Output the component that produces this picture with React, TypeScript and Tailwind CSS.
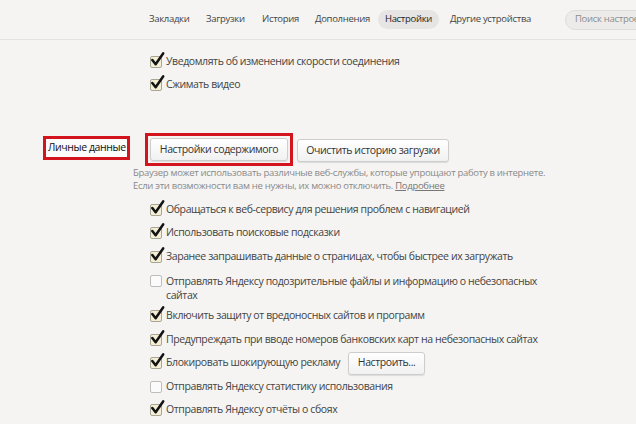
import React from "react";

const font = { fontFamily: '"Open Sans", "Noto Sans", sans-serif' };

function Check({ on }: { on: boolean }) {
    return (
        <span className="relative inline-block w-[12px] h-[12px] shrink-0">
            <span
                className={
                    "absolute inset-0 border rounded-[2px] " +
                    (on ? "border-[#a8a594] bg-[#f4eed4]" : "border-[#bdbdbd] bg-[#fbfbfb]")
                }
            />
            {on && (
                <svg viewBox="0 0 16 16" className="absolute left-[0px] top-[-4px] w-[15px] h-[15px]">
                    <path d="M2.5 8.5 L6 13 L14 1.5" fill="none" stroke="#141414" strokeWidth="2.7" strokeLinecap="round" strokeLinejoin="round" />
                </svg>
            )}
        </span>
    );
}

const txt = "text-[10.5px] tracking-[-0.4px] text-[#444] whitespace-nowrap";

function Row({ on, children }: { on: boolean; children: React.ReactNode }) {
    return (
        <div className="flex items-center gap-[4px] h-[23.5px]">
            <Check on={on} />
            <div className={txt}>{children}</div>
        </div>
    );
}

function Btn({ children, className = "" }: { children: React.ReactNode; className?: string }) {
    return (
        <div
            className={
                "h-[23px] flex items-center justify-center border border-[#cdcdcd] rounded-[3px] bg-gradient-to-b from-[#ffffff] to-[#f1f1f1] shadow-[0_1px_1px_rgba(0,0,0,0.1)] text-[10.5px] tracking-[-0.4px] text-[#333] whitespace-nowrap " +
                className
            }
        >
            {children}
        </div>
    );
}

export default function App() {
    return (
        <div className="w-[636px] h-[424px] overflow-hidden bg-[#f5f4f2]" style={font}>
            <header className="h-[40px] border-b border-[#e3e2e0] flex items-center pl-[149px] text-[9.5px] tracking-[-0.3px] text-[#444] whitespace-nowrap overflow-hidden">
                <span className="w-[57px] shrink-0">Закладки</span>
                <span className="w-[56px] shrink-0">Загрузки</span>
                <span className="w-[53px] shrink-0">История</span>
                <span className="w-[63px] shrink-0">Дополнения</span>
                <span className="w-[61px] h-[19px] shrink-0 rounded-full bg-[#e6e5e3] flex items-center justify-center text-[#222]">Настройки</span>
                <span className="w-[126px] shrink-0 pl-[11px]">Другие устройства</span>
                <div className="h-[20px] w-[100px] shrink-0 rounded-full bg-[#ecebe9] border border-[#dedddb] flex items-center pl-[9px] text-[#8d8d8d]">
                    Поиск настроек
                </div>
            </header>

            <div className="pl-[150px] pt-[10px]">
                <Row on>Уведомлять об изменении скорости соединения</Row>
                <Row on>Сжимать видео</Row>
            </div>

            <div className="flex mt-[36px]">
                <div className="w-[145px] pl-[43px] pt-[3px]">
                    <div className="w-[87px] h-[24px] border-[3px] border-[#d3141f] bg-[#fbfbfb] flex items-center pl-[2px] text-[10.5px] tracking-[-0.4px] text-[#111] whitespace-nowrap">
                        Личные данные
                    </div>
                </div>
                <div className="flex items-start">
                    <div className="border-[3px] border-[#d3141f] p-[2px]">
                        <Btn className="w-[138px]">Настройки содержимого</Btn>
                    </div>
                    <Btn className="w-[152px] ml-[4px] mt-[6px]">Очистить историю загрузки</Btn>
                </div>
            </div>

            <div className="pl-[133px] text-[9.5px] leading-[13px] tracking-[-0.3px] text-[#8a8a8a] whitespace-nowrap">
                <div>Браузер может использовать различные веб-службы, которые упрощают работу в интернете.</div>
                <div>
                    Если эти возможности вам не нужны, их можно отключить. <span className="underline text-[#777]">Подробнее</span>
                </div>
            </div>

            <div className="pl-[150px] pt-[6px]">
                <Row on>Обращаться к веб-сервису для решения проблем с навигацией</Row>
                <Row on>Использовать поисковые подсказки</Row>
                <Row on>Заранее запрашивать данные о страницах, чтобы быстрее их загружать</Row>
                <div className="flex items-start gap-[4px] h-[36px] pt-[6px]">
                    <Check on={false} />
                    <div className={txt + " leading-[14px] -mt-[1px]"}>
                        Отправлять Яндексу подозрительные файлы и информацию о небезопасных
                        <br />
                        сайтах
                    </div>
                </div>
                <Row on>Включить защиту от вредоносных сайтов и программ</Row>
                <Row on>Предупреждать при вводе номеров банковских карт на небезопасных сайтах</Row>
                <div className="flex items-center gap-[4px] h-[23.5px]">
                    <Check on />
                    <div className={txt}>Блокировать шокирующую рекламу</div>
                    <Btn className="w-[77px] ml-[4px]">Настроить...</Btn>
                </div>
                <Row on={false}>Отправлять Яндексу статистику использования</Row>
                <Row on>Отправлять Яндексу отчёты о сбоях</Row>
            </div>
        </div>
    );
}
